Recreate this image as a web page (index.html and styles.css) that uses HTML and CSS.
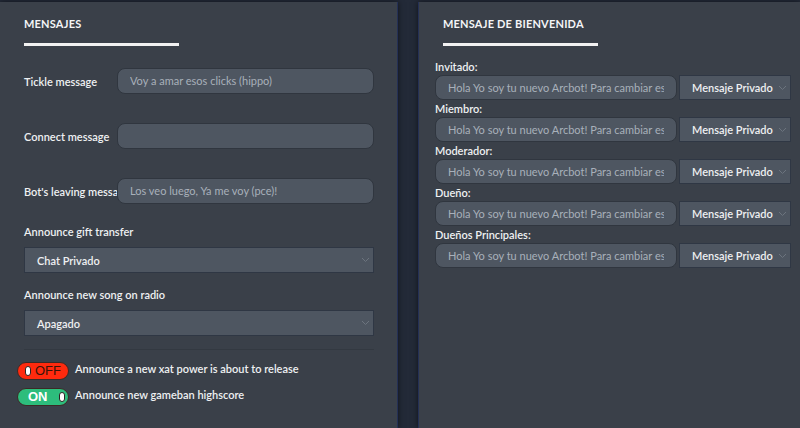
FILE: index.html
```html
<!DOCTYPE html>
<html>
	<head>
		<link rel="stylesheet" href="styles.css">
	</head>
	<body>
	<div class="page">

	<div class="panel panel-left">
		<h2 class="panel-title">MENSAJES</h2>
		<div class="title-bar"></div>

		<div class="field-row first">
			<label class="field-label">Tickle message</label>
			<div class="text-box"><span class="box-text">Voy a amar esos clicks (hippo)</span></div>
		</div>
		<div class="field-row">
			<label class="field-label">Connect message</label>
			<div class="text-box"></div>
		</div>
		<div class="field-row">
			<label class="field-label">Bot's leaving message</label>
			<div class="text-box"><span class="box-text">Los veo luego, Ya me voy (pce)!</span></div>
		</div>

		<div class="select-label gift">Announce gift transfer</div>
		<div class="select-box">
			<span>Chat Privado</span>
			<svg class="chevron" width="9" height="6" viewBox="0 0 9 6"><polyline points="1,1 4.5,4.5 8,1" fill="none" stroke="#6c747e" stroke-width="1"/></svg>
		</div>

		<div class="select-label">Announce new song on radio</div>
		<div class="select-box">
			<span>Apagado</span>
			<svg class="chevron" width="9" height="6" viewBox="0 0 9 6"><polyline points="1,1 4.5,4.5 8,1" fill="none" stroke="#6c747e" stroke-width="1"/></svg>
		</div>

		<hr class="divider" />

		<div class="toggle-row first">
			<div class="toggle off"><span class="knob"></span><span class="toggle-text">OFF</span></div>
			<span class="toggle-label">Announce a new xat power is about to release</span>
		</div>
		<div class="toggle-row">
			<div class="toggle on"><span class="toggle-text">ON</span><span class="knob"></span></div>
			<span class="toggle-label">Announce new gameban highscore</span>
		</div>
	</div>

	<div class="panel panel-right">
		<h2 class="panel-title">MENSAJE DE BIENVENIDA</h2>
		<div class="title-bar"></div>

		<div class="welcome-list">
			<div class="welcome-label">Invitado:</div>
			<div class="welcome-row">
				<div class="text-box small"><span class="box-text">Hola Yo soy tu nuevo Arcbot! Para cambiar este mensaje</span></div>
				<div class="select-box small"><span>Mensaje Privado</span><svg class="chevron" width="9" height="6" viewBox="0 0 9 6"><polyline points="1,1 4.5,4.5 8,1" fill="none" stroke="#6c747e" stroke-width="1"/></svg></div>
			</div>
			<div class="welcome-label">Miembro:</div>
			<div class="welcome-row">
				<div class="text-box small"><span class="box-text">Hola Yo soy tu nuevo Arcbot! Para cambiar este mensaje</span></div>
				<div class="select-box small"><span>Mensaje Privado</span><svg class="chevron" width="9" height="6" viewBox="0 0 9 6"><polyline points="1,1 4.5,4.5 8,1" fill="none" stroke="#6c747e" stroke-width="1"/></svg></div>
			</div>
			<div class="welcome-label">Moderador:</div>
			<div class="welcome-row">
				<div class="text-box small"><span class="box-text">Hola Yo soy tu nuevo Arcbot! Para cambiar este mensaje</span></div>
				<div class="select-box small"><span>Mensaje Privado</span><svg class="chevron" width="9" height="6" viewBox="0 0 9 6"><polyline points="1,1 4.5,4.5 8,1" fill="none" stroke="#6c747e" stroke-width="1"/></svg></div>
			</div>
			<div class="welcome-label">Dueño:</div>
			<div class="welcome-row">
				<div class="text-box small"><span class="box-text">Hola Yo soy tu nuevo Arcbot! Para cambiar este mensaje</span></div>
				<div class="select-box small"><span>Mensaje Privado</span><svg class="chevron" width="9" height="6" viewBox="0 0 9 6"><polyline points="1,1 4.5,4.5 8,1" fill="none" stroke="#6c747e" stroke-width="1"/></svg></div>
			</div>
			<div class="welcome-label">Dueños Principales:</div>
			<div class="welcome-row">
				<div class="text-box small"><span class="box-text">Hola Yo soy tu nuevo Arcbot! Para cambiar este mensaje</span></div>
				<div class="select-box small"><span>Mensaje Privado</span><svg class="chevron" width="9" height="6" viewBox="0 0 9 6"><polyline points="1,1 4.5,4.5 8,1" fill="none" stroke="#6c747e" stroke-width="1"/></svg></div>
			</div>
		</div>
	</div>

	</div>
	</body>
</html>
```

FILE: styles.css
```css
body {
	margin: 0;
	font-family: Lato, "Liberation Sans", sans-serif;
	font-size: 11px;
	color: #eef0f2;
	background-color: #252b37;
	overflow: hidden;
}

.page {
	display: grid;
	grid-template-columns: 398px 1fr;
	column-gap: 20px;
	height: 100vh;
	padding-top: 2px;
	box-sizing: border-box;
	background-color: #232a38;
}

.panel {
	background-color: #3a4049;
	box-shadow: 0 0 6px rgba(0, 0, 0, 0.55);
}
.panel-left {
	padding: 0 23px 0 24px;
	border-right: 1px solid #243056;
}
.panel-right {
	padding: 0 9px 0 16px;
	border-left: 1px solid #243056;
}

.panel-title {
	margin: 15px 0 0 0;
	font-size: 11px;
	font-weight: bold;
	line-height: 14px;
	letter-spacing: 0.2px;
	color: #f4f5f7;
}
.panel-right .panel-title,
.panel-right .title-bar {
	margin-left: 8px;
}

.title-bar {
	width: 155px;
	height: 3px;
	margin-top: 12px;
	background-color: #f2f2f2;
}

/* text rows */
.field-row {
	display: flex;
	align-items: center;
	margin-top: 29px;
}
.field-row.first {
	margin-top: 22px;
}
.field-label {
	flex: 0 0 93px;
	width: 93px;
	white-space: nowrap;
	font-weight: 600;
	font-size: 11px;
}
.text-box {
	flex: 1;
	min-width: 0;
	height: 26px;
	line-height: 24px;
	padding: 0 12px;
	box-sizing: border-box;
	border: 1px solid #30363f;
	border-radius: 8px;
	background-color: #4e5661;
	color: #a8b0ba;
	font-size: 11px;
	white-space: nowrap;
}
.box-text {
	display: block;
	overflow: hidden;
}

/* selects */
.select-label {
	margin-top: 14px;
	font-weight: 600;
	line-height: 16px;
}
.select-label.gift {
	margin-top: 20px;
}
.select-box {
	display: flex;
	align-items: center;
	justify-content: space-between;
	height: 26px;
	margin-top: 7px;
	padding: 0 3px 0 12px;
	box-sizing: border-box;
	border: 1px solid #2f3744;
	background-color: #4e5661;
	font-weight: 600;
	font-size: 11px;
	white-space: nowrap;
}
.chevron {
	flex: none;
}

.divider {
	margin: 13px 0 0 0;
	border: 0;
	border-top: 1px solid #333941;
}

/* toggles */
.toggle-row {
	display: flex;
	align-items: flex-start;
	gap: 6px;
	margin-left: -7px;
	margin-top: 8px;
}
.toggle-row.first {
	margin-top: 12px;
}
.toggle {
	display: flex;
	align-items: center;
	width: 52px;
	height: 18px;
	box-sizing: border-box;
	border: 1.5px solid #3b2a26;
	border-radius: 9px;
	padding: 0 4px 0 7px;
	gap: 4px;
}
.toggle.off {
	background-color: #ff2a0e;
	color: #3a1408;
}
.toggle.on {
	background-color: #2dbd7c;
	color: #ffffff;
	justify-content: space-between;
	padding: 0 3px 0 10px;
	font-weight: 600;
}
.knob {
	display: block;
	width: 6px;
	height: 10px;
	box-sizing: border-box;
	border: 1.5px solid #2b2523;
	border-radius: 3px;
	background-color: #ffffff;
}
.toggle-text {
	font-family: "Liberation Sans", Arial, sans-serif;
	font-size: 13px;
	line-height: 14px;
}
.toggle-label {
	font-weight: 600;
	line-height: 14px;
}

/* welcome messages */
.welcome-list {
	margin-top: 12px;
}
.welcome-label {
	font-weight: 600;
	line-height: 17px;
}
.welcome-row {
	display: flex;
	gap: 2px;
}
.text-box.small {
	flex: 0 0 242px;
	height: 25px;
	line-height: 23px;
}
.select-box.small {
	flex: 1;
	height: 25px;
	margin-top: 0;
	padding-left: 12px;
}
```
